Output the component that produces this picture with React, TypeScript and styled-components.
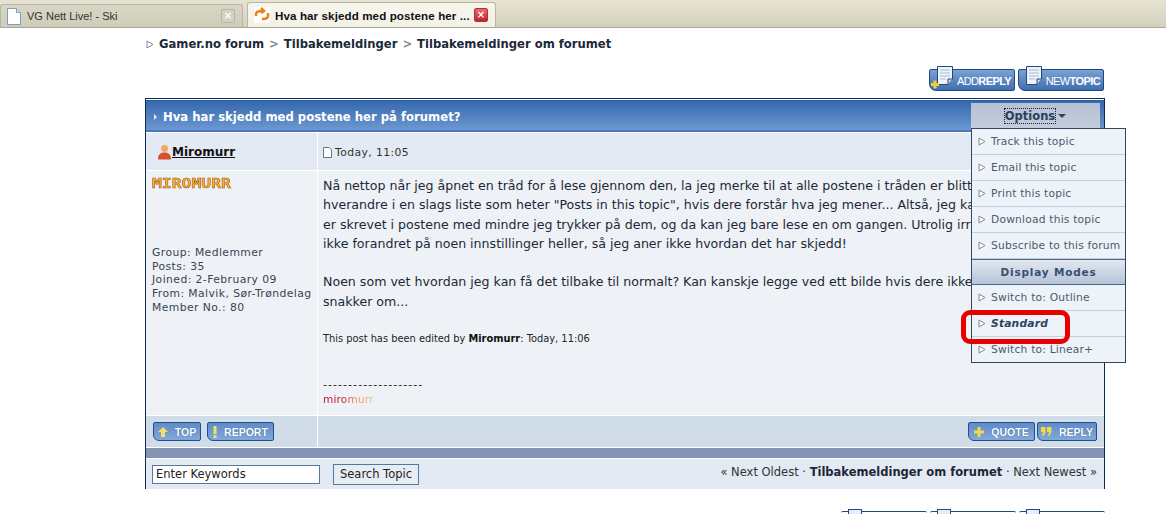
import React from 'react';
import styled, { createGlobalStyle } from 'styled-components';

const GlobalStyle = createGlobalStyle`
  html, body {
    margin: 0;
    padding: 0;
    background: #ffffff;
    overflow: hidden;
  }
  body {
    font-family: 'DejaVu Sans', Verdana, sans-serif;
    color: #1c2838;
  }
`;

const Page = styled.div`
  position: relative;
  width: 1166px;
  height: 514px;
  overflow: hidden;
`;

/* browser tabs */
const TabBar = styled.div`
  height: 27px;
  display: flex;
  align-items: flex-end;
  background: linear-gradient(#e6e3d2, #d3d0bc);
  border-bottom: 1px solid #a8a695;
  box-sizing: content-box;
`;

const Tab = styled.div<{ $active?: boolean }>`
  width: ${p => (p.$active ? 249 : 243)}px;
  height: ${p => (p.$active ? 25 : 23)}px;
  display: flex;
  align-items: center;
  box-sizing: border-box;
  margin-left: ${p => (p.$active ? 4 : 0)}px;
  padding: 0 7px 0 ${p => (p.$active ? 6 : 5)}px;
  gap: ${p => (p.$active ? 3 : 5)}px;
  font-family: 'Liberation Sans', sans-serif;
  font-size: ${p => (p.$active ? 11.6 : 11)}px;
  letter-spacing: ${p => (p.$active ? 0.1 : 0)}px;
  font-weight: ${p => (p.$active ? 700 : 400)};
  color: ${p => (p.$active ? '#111' : '#333')};
  background: ${p => (p.$active ? 'linear-gradient(#f7f6ee, #f3f1e6)' : 'linear-gradient(#d9d6c5, #cfccb8)')};
  border: 1px solid #b8b6a5;
  border-bottom: none;
  border-radius: 3px 3px 0 0;
`;

const TabLabel = styled.span`
  flex: 1;
  white-space: nowrap;
  overflow: hidden;
`;

const TabClose = styled.span<{ $active?: boolean }>`
  width: 14px;
  height: 14px;
  box-sizing: border-box;
  display: flex;
  align-items: center;
  justify-content: center;
  font-family: 'DejaVu Sans', sans-serif;
  font-size: 10px;
  font-weight: 700;
  line-height: 1;
  border-radius: 2px;
  color: #fff;
  background: ${p => (p.$active ? 'linear-gradient(#ee6a6a, #c2242c)' : '#d3d1c4')};
  border: 1px solid ${p => (p.$active ? '#a33' : '#b6b4a8')};
`;

/* breadcrumb and top buttons */
const Crumbs = styled.div`
  height: 33px;
  padding: 0 0 1px 146px;
  box-sizing: border-box;
  font-size: 11.6px;
  font-weight: 700;
  color: #1c2838;
  display: flex;
  align-items: center;
  gap: 5px;
`;

const CrumbSep = styled.span`
  color: #8d8d8d;
  font-weight: 700;
`;

const Wrap = styled.div`
  margin-left: 145px;
  width: 960px;
`;

const TopActions = styled.div`
  display: flex;
  justify-content: flex-end;
  gap: 3px;
  padding: 8px 1px 0 0;
  height: 37px;
  box-sizing: border-box;
`;

const BigButton = styled.div`
  position: relative;
  width: 86px;
  height: 22px;
  box-sizing: border-box;
  border: 1px solid #1f4a80;
  border-radius: 2px 2px 2px 7px;
  background: linear-gradient(#7aa2d4, #3f6fae);
  color: #fff;
  font-family: 'Liberation Sans', sans-serif;
  font-size: 11px;
  display: flex;
  align-items: center;
  justify-content: flex-end;
  padding: 2px 3px 0 0;
  letter-spacing: -0.6px;
  b { font-weight: 700; }
`;

const BigIcon = styled.svg`
  position: absolute;
  left: 0;
  top: -4px;
`;

/* main forum table */
const Board = styled.div`
  position: relative;
  height: 391px;
  box-sizing: border-box;
  border: 1px solid #0f2a52;
  background: #fff;
  padding-top: 1px;
`;

const TitleBar = styled.div`
  height: 32px;
  border-top: 1px solid #2a5aa0;
  border-bottom: 2px solid #4b78b8;
  box-sizing: border-box;
  background: linear-gradient(#3668ae, #6c98d0);
  color: #fff;
  font-size: 11.65px;
  font-weight: 700;
  display: flex;
  align-items: center;
  padding: 2px 0 0 8px;
  gap: 6px;
`;

const Caret = styled.span`
  width: 0;
  height: 0;
  border-left: 3px solid #dfe9f6;
  border-top: 3px solid transparent;
  border-bottom: 3px solid transparent;
`;

const PostGrid = styled.div`
  display: grid;
  grid-template-columns: 171px 1fr;
  grid-template-rows: 37px 244px 31px;
  gap: 1px;
  background: #fff;
  margin-top: 1px;
`;

const AuthorCell = styled.div`
  background: #e3eaf3;
  display: flex;
  align-items: center;
  padding-left: 11px;
  gap: 0;
  font-size: 12px;
  font-weight: 700;
  color: #111;
  text-decoration: underline;
`;

const DateCell = styled.div`
  background: #e3eaf3;
  display: flex;
  align-items: center;
  padding: 2px 0 0 5px;
  gap: 3px;
  font-size: 10.8px;
  color: #333;
  letter-spacing: 0.4px;
`;

const ProfileCell = styled.div`
  background: #eef2f7;
  padding: 5px 6px;
  display: flex;
  flex-direction: column;
`;

const PixelName = styled.div`
  font-family: 'DejaVu Sans Mono', monospace;
  font-size: 14px;
  line-height: 14px;
  font-weight: 700;
  color: #f3b043;
  -webkit-text-stroke: 0.5px #a9560e;
  transform: scaleX(1.17);
  transform-origin: left;
`;

const ProfileInfo = styled.div`
  margin-top: 56px;
  font-size: 10.8px;
  line-height: 13.7px;
  color: #3a4350;
  white-space: nowrap;
  letter-spacing: 0.42px;
`;

const BodyCell = styled.div`
  background: #eef2f7;
  padding: 5px 5px;
  overflow: hidden;
`;

const PostText = styled.div`
  font-size: 12.6px;
  line-height: 19.3px;
  color: #1c2838;
  white-space: nowrap;
`;

const EditNote = styled.div`
  margin-top: 22px;
  font-size: 9.85px;
  color: #222;
  b { font-weight: 700; color: #111; }
`;

const Signature = styled.div`
  margin-top: 33px;
  font-size: 11px;
  line-height: 15px;
  letter-spacing: 1.05px;
  color: #222;
`;

const SigName = styled.div`
  font-size: 10.5px;
  letter-spacing: 0.2px;
  background: linear-gradient(90deg, #c8102e 0 35%, #e8864a 60%, #f5cf7a 100%);
  -webkit-background-clip: text;
  background-clip: text;
  color: transparent;
  width: 52px;
`;

const ActionCell = styled.div<{ $right?: boolean }>`
  background: #d1dce9;
  display: flex;
  align-items: center;
  justify-content: ${p => (p.$right ? 'flex-end' : 'flex-start')};
  gap: ${p => (p.$right ? 2 : 6)}px;
  padding: 0 7px;
`;

const SmallButton = styled.div<{ $w: number }>`
  width: ${p => p.$w}px;
  height: 19px;
  box-sizing: border-box;
  border: 1px solid #234f86;
  border-radius: 2px 2px 2px 6px;
  background: linear-gradient(#5f8cc8, #82a8d8);
  color: #fff;
  font-family: 'Liberation Sans', sans-serif;
  font-size: 10.5px;
  font-weight: 700;
  display: flex;
  align-items: center;
  justify-content: center;
  gap: 7px;
  text-shadow: 0 0 1px #274f83;
`;

const SlimBar = styled.div`
  height: 10px;
  margin-top: 1px;
  background: #8394b3;
`;

const FootBar = styled.div`
  height: 30px;
  margin-top: 1px;
  background: #e3eaf3;
  display: flex;
  align-items: center;
  padding: 0 7px 2px 6px;
  box-sizing: border-box;
  font-size: 12px;
  color: #333;
`;

const SearchInput = styled.div`
  width: 168px;
  height: 19px;
  margin-top: 2px;
  box-sizing: border-box;
  border: 1px solid #5577a0;
  background: #fff;
  font-size: 11.5px;
  padding-left: 3px;
  line-height: 17px;
  color: #222;
`;

const SearchButton = styled.div`
  margin: 2px 0 0 13px;
  width: 86px;
  height: 21px;
  box-sizing: border-box;
  border: 1px solid #5577a0;
  background: #e8edf4;
  font-size: 11.5px;
  line-height: 19px;
  text-align: center;
  color: #222;
`;

const Pager = styled.div`
  margin: 0 0 2px auto;
  font-size: 11.5px;
  color: #333;
  white-space: nowrap;
  b { color: #1c2838; }
`;

/* options dropdown, sits over the post */
const OptionsTab = styled.div`
  position: absolute;
  left: 825px;
  top: 4px;
  width: 129px;
  height: 25px;
  background: linear-gradient(#b6c2d4, #c2ccdb);
  display: flex;
  align-items: center;
  justify-content: center;
  gap: 3px;
  font-size: 11.5px;
  font-weight: 700;
  color: #2b3f5e;
`;

const OptionsLabel = styled.span`
  outline: 1px dotted #222;
`;

const OptionsArrow = styled.span`
  width: 0;
  height: 0;
  border-top: 4px solid #333f52;
  border-left: 4px solid transparent;
  border-right: 4px solid transparent;
`;

const Menu = styled.div`
  position: absolute;
  left: 825px;
  top: 29px;
  width: 155px;
  box-sizing: border-box;
  border: 1px solid #33465f;
  background: #eef3f9;
`;

const MenuItem = styled.div<{ $strong?: boolean }>`
  height: 26px;
  box-sizing: border-box;
  display: flex;
  align-items: center;
  gap: 5px;
  padding-left: 6px;
  border-bottom: 1px solid #c3cedc;
  font-size: 10.7px;
  letter-spacing: 0.2px;
  white-space: nowrap;
  color: ${p => (p.$strong ? '#2b3f5e' : '#4c5a6c')};
  font-weight: ${p => (p.$strong ? 700 : 400)};
  font-style: ${p => (p.$strong ? 'italic' : 'normal')};
  &:last-child { border-bottom: none; height: 25px; }
`;

const MenuHeading = styled.div`
  height: 26px;
  box-sizing: border-box;
  border-top: 1px solid #4d6788;
  border-bottom: 1px solid #4d6788;
  background: linear-gradient(#e2e8f1, #b5c3d8);
  font-size: 10.5px;
  font-weight: 700;
  letter-spacing: 0.8px;
  color: #3b4e6e;
  display: flex;
  align-items: center;
  justify-content: center;
`;

const Ring = styled.div`
  position: absolute;
  left: 961px;
  top: 310px;
  width: 109px;
  height: 34px;
  box-sizing: border-box;
  border: 5px solid #e60000;
  border-radius: 9px;
`;

const BottomActions = styled.div`
  display: flex;
  justify-content: flex-end;
  gap: 3px;
  margin-top: 22px;
`;

const Peek = styled.div`
  position: relative;
  width: 86px;
  height: 12px;
  border-top: 1px solid #1f4a80;
  border-radius: 2px 2px 0 0;
  &::before {
    content: '';
    position: absolute;
    left: 7px;
    top: -3px;
    width: 14px;
    height: 10px;
    box-sizing: border-box;
    border: 1px solid #1f4a80;
    background: #e7eef7;
  }
`;

const Triangle = () => (
  <svg width="8" height="9" viewBox="0 0 8 9" style={{ flex: 'none' }}>
    <path d="M1 1 L7 4.500 L1 8 Z" fill="#fff" stroke="#7f8a96" strokeWidth="1" />
  </svg>
);

const DocIcon = () => (
  <svg width="9" height="11" viewBox="0 0 9 11">
    <path d="M.5.5H6L8.500 3V10.500H.5Z" fill="#fff" stroke="#6a7484" />
  </svg>
);

const PageIcon = ({ plus }: { plus?: boolean }) => (
  <BigIcon width="26" height="24" viewBox="0 0 26 24">
    <path d="M7.500 .5H22.500V13L18 18.500H7.500Z" fill="#eef3fa" stroke="#1f4a80" />
    <path d="M18 18.500V13H22.500" fill="#c9d6e8" stroke="#1f4a80" />
    <path d="M10 4H20M10 7H20M10 10H20M10 13H16" stroke="#a7bbd6" strokeWidth="1" />
    {plus && <path d="M5 14.500V22.500M1 18.500H9" stroke="#f1cf3a" strokeWidth="3" />}
  </BigIcon>
);

const UserIcon = () => (
  <svg width="15" height="16" viewBox="0 0 15 16">
    <circle cx="7.500" cy="4.500" r="3.500" fill="#f0a860" />
    <path d="M1 15.500C1 10 4 8.500 7.500 8.500S14 10 14 15.500Z" fill="#d6502a" />
  </svg>
);

const TabPageIcon = () => (
  <svg width="16" height="17" viewBox="0 0 16 17">
    <path d="M1.500 .5H10.500L14.500 4.500V16.500H1.500Z" fill="#fff" stroke="#7c9cc6" />
    <path d="M10.500 .5V4.500H14.500" fill="#d8e4f2" stroke="#7c9cc6" />
  </svg>
);

const TabLogo = () => (
  <svg width="16" height="16" viewBox="0 0 16 16" style={{ flex: 'none', marginRight: 2 }}>
    <rect width="16" height="16" fill="#fff" />
    <path d="M2 9V7C2 4 5 4 8 4M7 1L10 4L7 6" fill="none" stroke="#ef7d1a" strokeWidth="2.500" />
    <path d="M14 6V9C14 12 11 12 8 12" fill="none" stroke="#ef7d1a" strokeWidth="2.500" />
  </svg>
);

const ArrowUp = () => (
  <svg width="10" height="10" viewBox="0 0 10 10">
    <path d="M5 0L10 5H7V10H3V5H0Z" fill="#f3e06a" />
  </svg>
);

const Exclaim = () => (
  <svg width="4" height="12" viewBox="0 0 4 12">
    <path d="M.5 0H3.500V8H.5ZM.5 9H3.500V12H.5Z" fill="#f3e06a" />
  </svg>
);

const Plus = () => (
  <svg width="10" height="10" viewBox="0 0 10 10">
    <path d="M3.500 0H6.500V3.500H10V6.500H6.500V10H3.500V6.500H0V3.500H3.500Z" fill="#f3d94a" />
  </svg>
);

const Quotes = () => (
  <svg width="11" height="9" viewBox="0 0 11 9">
    <path d="M0 0H4.500V5L2.500 9H1L2 5H0ZM6 0H10.500V5L8.500 9H7L8 5H6Z" fill="#f3d94a" />
  </svg>
);

const options = ['Track this topic', 'Email this topic', 'Print this topic', 'Download this topic', 'Subscribe to this forum'];

export default function App() {
  return (
    <Page>
      <GlobalStyle />
      <TabBar>
        <Tab>
          <TabPageIcon />
          <TabLabel>VG Nett Live! - Ski</TabLabel>
          <TabClose>×</TabClose>
        </Tab>
        <Tab $active>
          <TabLogo />
          <TabLabel>Hva har skjedd med postene her ...</TabLabel>
          <TabClose $active>×</TabClose>
        </Tab>
      </TabBar>
      <Crumbs>
        <Triangle />
        Gamer.no forum <CrumbSep>&gt;</CrumbSep> Tilbakemeldinger <CrumbSep>&gt;</CrumbSep> Tilbakemeldinger om forumet
      </Crumbs>
      <Wrap>
        <TopActions>
          <BigButton><PageIcon plus />ADD<b>REPLY</b></BigButton>
          <BigButton><PageIcon />NEW<b>TOPIC</b></BigButton>
        </TopActions>
        <Board>
          <TitleBar><Caret />Hva har skjedd med postene her på forumet?</TitleBar>
          <PostGrid>
            <AuthorCell><UserIcon />Miromurr</AuthorCell>
            <DateCell><DocIcon />Today, 11:05</DateCell>
            <ProfileCell>
              <PixelName>MIROMURR</PixelName>
              <ProfileInfo>
                Group: Medlemmer<br />
                Posts: 35<br />
                Joined: 2-February 09<br />
                From: Malvik, Sør-Trøndelag<br />
                Member No.: 80
              </ProfileInfo>
            </ProfileCell>
            <BodyCell>
              <PostText>
                Nå nettop når jeg åpnet en tråd for å lese gjennom den, la jeg merke til at alle postene i tråden er blitt<br />
                hverandre i en slags liste som heter "Posts in this topic", hvis dere forstår hva jeg mener... Altså, jeg kan<br />
                er skrevet i postene med mindre jeg trykker på dem, og da kan jeg bare lese en om gangen. Utrolig irr<br />
                ikke forandret på noen innstillinger heller, så jeg aner ikke hvordan det har skjedd!<br />
                <br />
                Noen som vet hvordan jeg kan få det tilbake til normalt? Kan kanskje legge ved ett bilde hvis dere ikke<br />
                snakker om...
              </PostText>
              <EditNote>This post has been edited by <b>Miromurr</b>: Today, 11:06</EditNote>
              <Signature>
                --------------------
                <SigName>miromurr</SigName>
              </Signature>
            </BodyCell>
            <ActionCell>
              <SmallButton $w={48}><ArrowUp />TOP</SmallButton>
              <SmallButton $w={67}><Exclaim />REPORT</SmallButton>
            </ActionCell>
            <ActionCell $right>
              <SmallButton $w={67}><Plus />QUOTE</SmallButton>
              <SmallButton $w={60}><Quotes />REPLY</SmallButton>
            </ActionCell>
          </PostGrid>
          <SlimBar />
          <FootBar>
            <SearchInput>Enter Keywords</SearchInput>
            <SearchButton>Search Topic</SearchButton>
            <Pager>« Next Oldest · <b>Tilbakemeldinger om forumet</b> · Next Newest »</Pager>
          </FootBar>
          <OptionsTab>
            <OptionsLabel>Options</OptionsLabel>
            <OptionsArrow />
          </OptionsTab>
          <Menu>
            {options.map(o => (
              <MenuItem key={o}><Triangle />{o}</MenuItem>
            ))}
            <MenuHeading>Display Modes</MenuHeading>
            <MenuItem><Triangle />Switch to: Outline</MenuItem>
            <MenuItem $strong><Triangle />Standard</MenuItem>
            <MenuItem><Triangle />Switch to: Linear+</MenuItem>
          </Menu>
        </Board>
        <BottomActions>
          <Peek />
          <Peek />
          <Peek />
        </BottomActions>
      </Wrap>
      <Ring />
    </Page>
  );
}
